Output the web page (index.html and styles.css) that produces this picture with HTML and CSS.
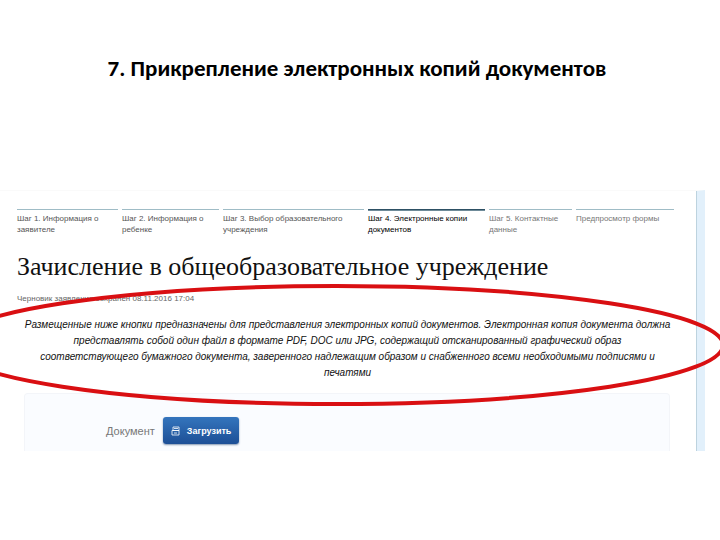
FILE: index.html
```
<!DOCTYPE html>
<html lang="ru">

<head>
    <meta charset="utf-8">
    <title>Прикрепление электронных копий документов</title>
    <link rel="stylesheet" href="styles.css">
</head>

<body>
    <h1 class="slide-title">7. Прикрепление электронных копий документов</h1>

    <main class="screen">
        <div class="content">
            <ol class="steps">
                <li class="step">Шаг 1. Информация о<br>заявителе</li>
                <li class="step">Шаг 2. Информация о<br>ребенке</li>
                <li class="step">Шаг 3. Выбор образовательного<br>учреждения</li>
                <li class="step step-active">Шаг 4. Электронные копии<br>документов</li>
                <li class="step step-next">Шаг 5. Контактные<br>данные</li>
                <li class="step step-next">Предпросмотр формы</li>
            </ol>

            <h2 class="form-title">Зачисление в общеобразовательное учреждение</h2>
            <p class="draft">Черновик заявления сохранен 08.11.2016 17:04</p>

            <p class="intro">
                Размещенные ниже кнопки предназначены для представления электронных копий документов. Электронная копия документа должна<br>
                представлять собой один файл в формате PDF, DOC или JPG, содержащий отсканированный графический образ<br>
                соответствующего бумажного документа, заверенного надлежащим образом и снабженного всеми необходимыми подписями и<br>
                печатями
            </p>

            <form class="upload">
                <label class="upload-label" for="upload-btn">Документ</label>
                <button class="upload-btn" id="upload-btn" type="button">
                    <svg class="upload-icon" viewBox="0 0 9 10" aria-hidden="true">
                        <path d="M2 1h6v3.5H2zM1 4.5h7V9H1zM3 2.5h4M3 7h3" fill="none" stroke="currentColor" stroke-width=".8" />
                    </svg>
                    Загрузить
                </button>
            </form>
        </div>

        <!-- red marker around the instructions -->
        <svg class="marker" viewBox="0 0 720 128" preserveAspectRatio="none" aria-hidden="true">
            <ellipse cx="336" cy="64" rx="387" ry="59" fill="none" stroke="#d90f12" stroke-width="4" />
        </svg>
    </main>
</body>

</html>
```
FILE: styles.css
```
body {
    margin: 0;
    background: #fff;
    color: #111;
    font-family: "Liberation Sans", Arial, sans-serif;
    overflow-x: hidden;
}

.slide-title {
    margin: 55px 6px 109px 0;
    font: bold 23px/26px Carlito, Lato, sans-serif;
    color: #000;
    text-align: center;
}

.screen {
    position: relative;
    padding-right: 15px;
}

.content {
    padding: 18px 23px 0 17px;
    border-top: 1px solid #fafafa;
    border-right: 8px solid #e2f0fb;
    box-shadow: inset -1px 0 #bdd3df;
}

.steps {
    display: grid;
    grid-template-columns: 101fr 97fr 141fr 117fr 83fr 98fr;
    gap: 4px;
    margin: 0;
    padding: 0;
    list-style: none;
}

.step {
    padding-top: 3px;
    border-top: 1px solid #9fbcc6;
    font-size: 8px;
    line-height: 11px;
    color: #555;
    white-space: nowrap;
}

.step-active {
    border-top-color: #2d5064;
    box-shadow: inset 0 1px #6f8b99;
    color: #000;
}

.step-next {
    color: #777;
}

.form-title {
    margin: 15px 0 0;
    font: 26px/34px "Liberation Serif", serif;
    white-space: nowrap;
}

.draft {
    margin: 8px 0 0;
    font-size: 8px;
    line-height: 14px;
    color: #666;
}

.intro {
    margin: 11px -4px 12px 0;
    font-size: 10px;
    font-style: italic;
    line-height: 16px;
    text-align: center;
    white-space: nowrap;
}

.upload {
    display: flex;
    align-items: center;
    gap: 8px;
    margin: 0 4px 0 7px;
    padding: 23px 0 7px 81px;
    border: 1px solid #f3f5f9;
    border-bottom: 0;
    border-radius: 4px 4px 0 0;
    background: #fafcff;
}

.upload-label {
    font-size: 11px;
    color: #777;
}

.upload-btn {
    display: flex;
    align-items: center;
    gap: 7px;
    height: 27px;
    padding: 0 8px;
    border: 0;
    border-radius: 3px;
    background: linear-gradient(#3475bd, #1d4f96);
    box-shadow: 0 1px 2px #8295b0;
    color: #fff;
    font: bold 9px/16px "Liberation Sans", Arial, sans-serif;
}

.upload-icon {
    width: 9px;
    height: 10px;
}

.marker {
    position: absolute;
    top: 91px;
    left: 0;
    width: 100%;
    height: 128px;
    pointer-events: none;
}
```
